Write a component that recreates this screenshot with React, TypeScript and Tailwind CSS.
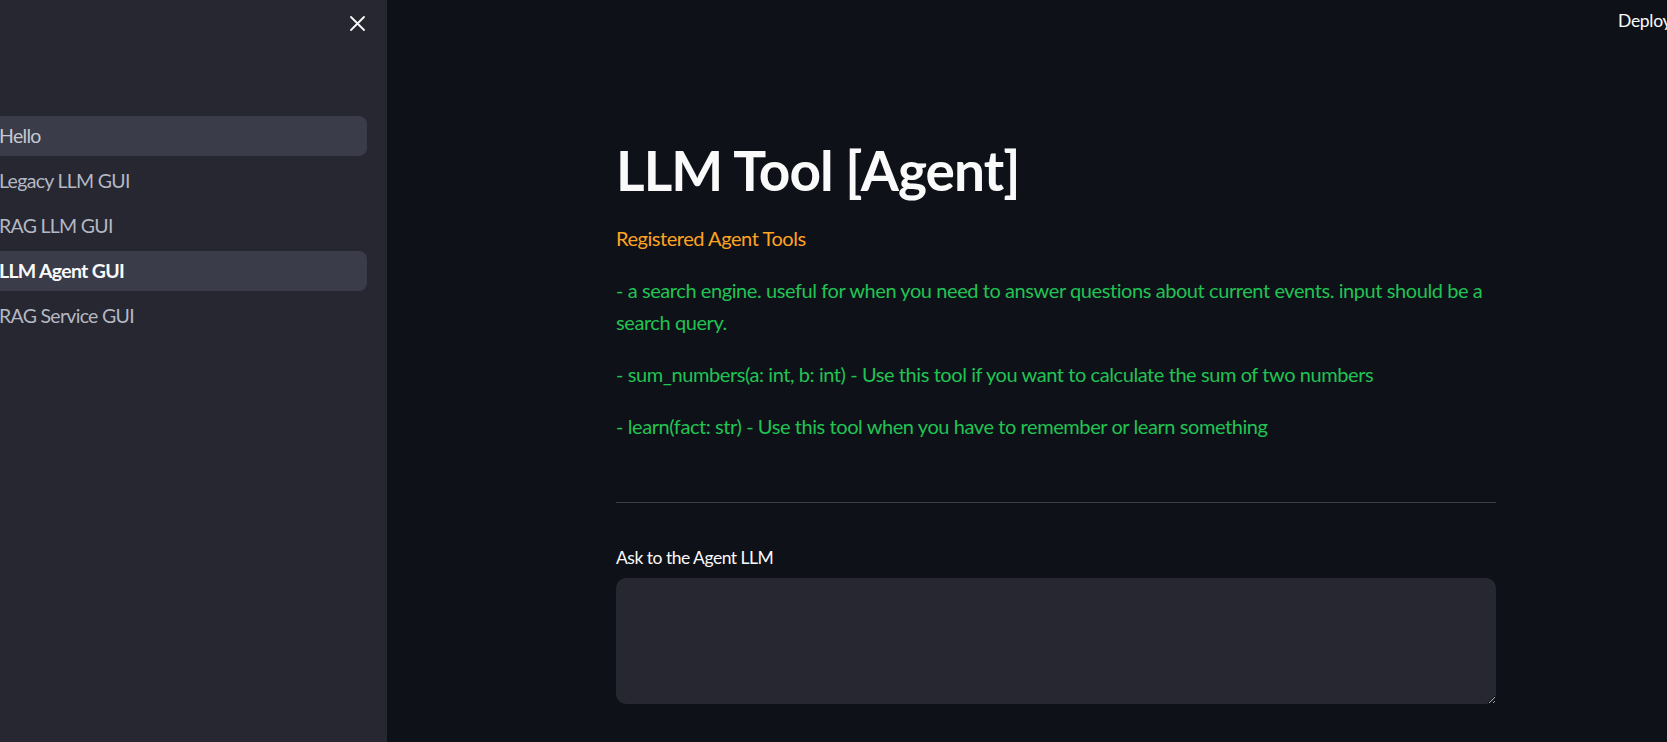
import React from 'react'

const font = { fontFamily: 'Lato, "Noto Sans", sans-serif' }

const pages = [
  { name: 'Hello', hover: true },
  { name: 'Legacy LLM GUI' },
  { name: 'RAG LLM GUI' },
  { name: 'LLM Agent GUI', active: true },
  { name: 'RAG Service GUI' },
]

const tools = [
  '- a search engine. useful for when you need to answer questions about current events. input should be a search query.',
  '- sum_numbers(a: int, b: int) - Use this tool if you want to calculate the sum of two numbers',
  '- learn(fact: str) - Use this tool when you have to remember or learn something',
]

export default function App() {
  return (
    <div className="flex h-[742px] w-[1667px] overflow-hidden bg-[#0e1117]" style={font}>
      {/* sidebar */}
      <aside className="flex w-[387px] shrink-0 flex-col overflow-hidden bg-[#262730]">
        <div className="flex h-[116px] items-start justify-end pr-[22px] pt-[16px]">
          <button className="text-[#fafafa]">
            <svg width="15" height="15" viewBox="0 0 15 15">
              <path d="M1 1L14 14M14 1L1 14" stroke="currentColor" strokeWidth="1.8" strokeLinecap="round" />
            </svg>
          </button>
        </div>
        <nav className="flex flex-col gap-[5px] pr-[20px]">
          {pages.map((p) => (
            <div
              key={p.name}
              className={
                'flex h-[40px] items-center rounded-lg -ml-6 pl-[23px] text-[19.5px] tracking-[-0.7px] ' +
                (p.active
                  ? 'bg-[#3b3c49] font-bold text-[#fafafa]'
                  : p.hover
                  ? 'bg-[#3b3c49] text-[#c6c9d2]'
                  : 'text-[#b4b8c4]')
              }
            >
              {p.name}
            </div>
          ))}
        </nav>
      </aside>

      {/* main */}
      <main className="relative flex-1">
        <header className="flex h-[42px] items-center justify-end">
          <span className="w-[49px] overflow-hidden whitespace-nowrap text-[17.5px] tracking-[-0.3px] text-[#fafafa]">Deploy</span>
        </header>

        <div className="ml-[229px] w-[880px] pt-[95px]">
          <h1 className="h-[66px] text-[55px] font-bold leading-[66px] tracking-[-0.9px] text-[#fafafa]">LLM Tool [Agent]</h1>
          <p className="mt-[19px] text-[20px] leading-[32px] tracking-[-0.45px] text-[#ffa421]">Registered Agent Tools</p>
          <div className="mt-[20px] flex flex-col gap-[20px]">
            {tools.map((t) => (
              <p key={t} className="text-[20px] leading-[32px] tracking-[-0.42px] text-[#21c354]">
                {t}
              </p>
            ))}
          </div>
          <hr className="mt-[60px] border-t border-[#3b3d44]" />
          <label className="mt-[44px] block text-[17.5px] leading-[22px] tracking-[-0.5px] text-[#fafafa]">Ask to the Agent LLM</label>
          <textarea className="mt-[9px] block h-[126px] w-full resize-y rounded-[10px] bg-[#262730] px-4 py-3 text-[20px] text-[#fafafa] outline-none" />
        </div>
      </main>
    </div>
  )
}
